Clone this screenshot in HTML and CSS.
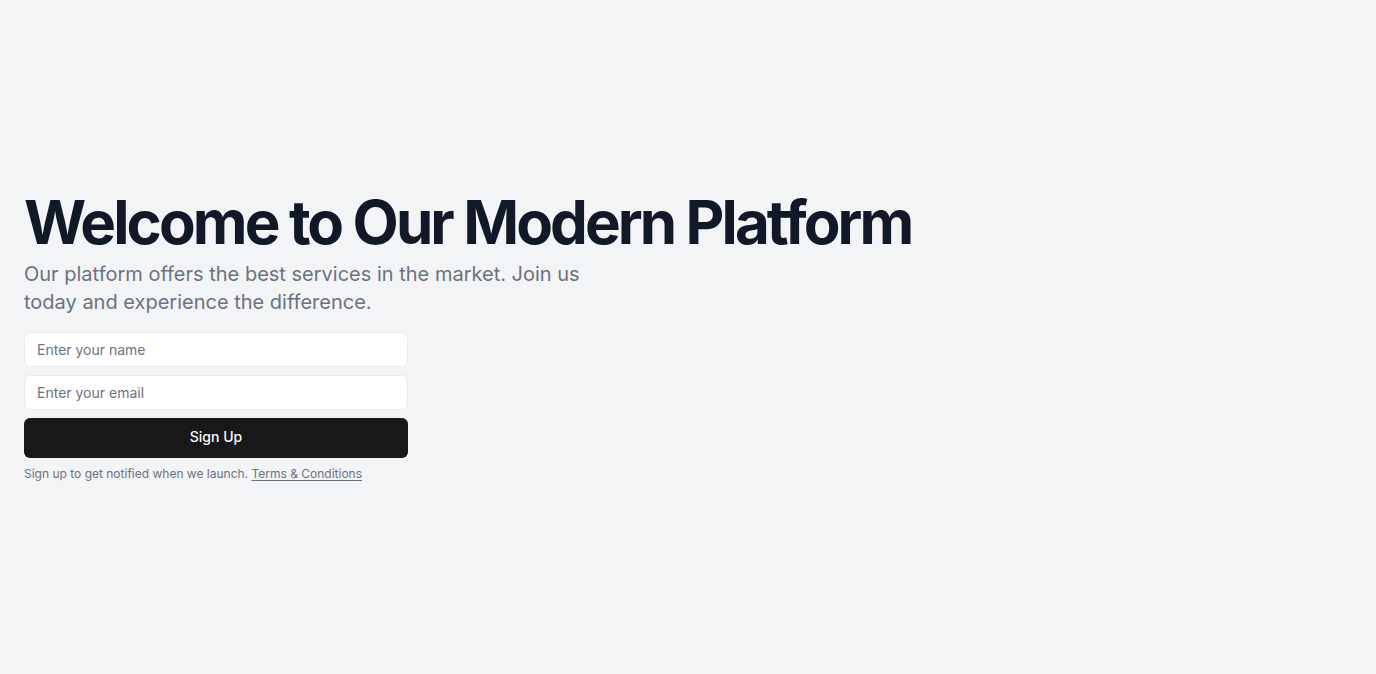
FILE: index.html
```html
<!DOCTYPE html>
<html lang="en">
<head>
<meta charset="utf-8">
<title>Welcome</title>
<link rel="stylesheet" href="styles.css">
</head>
<body>
<main class="page">
  <section class="hero">
    <div class="intro">
      <h1 class="title">Welcome to Our Modern Platform</h1>
      <p class="lead">Our platform offers the best services in the market. Join us today and experience the difference.</p>
    </div>
    <div class="signup">
      <form class="form">
        <input class="field" type="text" placeholder="Enter your name">
        <input class="field" type="email" placeholder="Enter your email">
        <button class="btn" type="submit">Sign Up</button>
      </form>
      <p class="note">Sign up to get notified when we launch. <a class="link" href="#">Terms &amp; Conditions</a></p>
    </div>
  </section>
</main>
</body>
</html>
```
FILE: styles.css
```css
* { box-sizing: border-box; }
html, body { margin: 0; padding: 0; }
body {
  background: #f3f4f6;
  font-family: Inter, "Noto Sans", sans-serif;
  color: #111827;
}
.page {
  min-height: 674px;
  display: flex;
  align-items: center;
  padding: 0 24px;
}
.hero {
  display: flex;
  flex-direction: column;
  gap: 16px;
}
.intro {
  display: flex;
  flex-direction: column;
  gap: 8px;
}
.title {
  margin: 0;
  font-size: 60px;
  line-height: 60px;
  font-weight: 700;
  letter-spacing: -2.9px;
  color: #111827;
}
.lead {
  margin: 0;
  max-width: 600px;
  font-size: 20px;
  line-height: 28px;
  color: #6b7280;
}
.signup {
  width: 384px;
  display: flex;
  flex-direction: column;
  gap: 8px;
}
.form {
  display: flex;
  flex-direction: column;
  gap: 8px;
  margin: 0;
}
.field {
  height: 35px;
  width: 100%;
  border: 1px solid #e9eaee;
  border-radius: 6px;
  background: #ffffff;
  padding: 0 12px;
  font-family: Inter, sans-serif;
  font-size: 14px;
  color: #111827;
  outline: none;
}
.field::placeholder { color: #6b7280; }
.btn {
  height: 40px;
  width: 100%;
  border: none;
  border-radius: 6px;
  background: #18181b;
  color: #fafafa;
  font-family: Inter, sans-serif;
  font-size: 14px;
  line-height: 20px;
  font-weight: 500;
  padding: 0 0 2px;
  cursor: pointer;
}
.note {
  margin: 0;
  font-size: 12px;
  line-height: 16px;
  color: #6b7280;
}
.link {
  color: #6b7280;
  text-decoration: underline;
  text-underline-offset: 2px;
}
```
